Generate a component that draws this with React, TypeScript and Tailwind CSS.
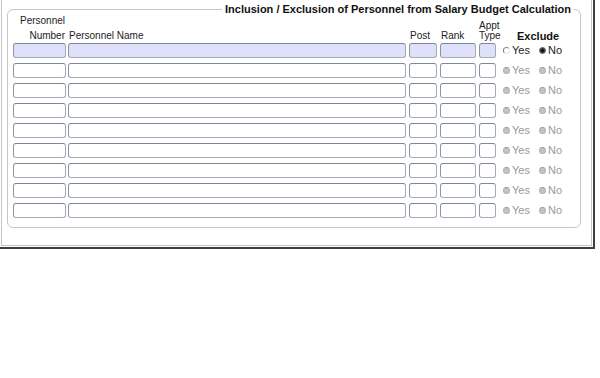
import React from "react";

const inputBase =
  "h-[15px] shrink-0 rounded-[3px] border border-[#a3abb9] border-t-[#7e8797] border-l-[#8c95a5]";

function Radio({ state }: { state: "on" | "off" | "disabled" }) {
  if (state === "disabled") {
    return (
      <span className="inline-block w-[7px] h-[7px] rounded-full bg-[#c4c4c4] border border-[#b0b0b0] border-t-[#9a9a9a]" />
    );
  }
  if (state === "on") {
    return (
      <span className="inline-flex items-center justify-center w-[7px] h-[7px] rounded-full bg-[#3a3a3a] border border-[#6a6a6a]">
        <span className="w-[3px] h-[3px] rounded-full bg-[#111]" />
      </span>
    );
  }
  return (
    <span className="inline-block w-[7px] h-[7px] rounded-full bg-white border border-[#e6e6e6] border-l-[#777] border-t-[#888]" />
  );
}

function Row({ first }: { first: boolean }) {
  const fill = first ? "bg-[#dfe1fa]" : "bg-white";
  return (
    <div className="flex items-center h-[15px]">
      <div className={`${inputBase} ${fill} w-[53px]`} />
      <div className={`${inputBase} ${fill} ml-[2px] w-[338px]`} />
      <div className={`${inputBase} ${fill} ml-[3px] w-[28px]`} />
      <div className={`${inputBase} ${fill} ml-[3px] w-[36px]`} />
      <div className={`${inputBase} ${fill} ml-[3px] w-[17px]`} />
      <div
        className={`ml-[7px] flex items-center text-[11px] leading-[13px] ${
          first ? "text-[#222]" : "text-[#9a9a9a]"
        }`}
      >
        <Radio state={first ? "off" : "disabled"} />
        <span className="ml-[2px]">Yes</span>
        <span className="ml-[9px] flex items-center">
          <Radio state={first ? "on" : "disabled"} />
        </span>
        <span className="ml-[2px]">No</span>
      </div>
    </div>
  );
}

export default function App() {
  return (
    <div className="w-[600px] h-[378px] bg-white font-['Liberation_Sans',Arial,sans-serif] text-[#222]">
      <div className="w-[595px] border-r-2 border-b-2 border-[#3f3f3f]">
        <div className="ml-[1px] mr-[1px] mb-[1px] border-l border-r border-b border-[#c4c4c4] pt-[3px] pb-[17px]">
          <fieldset className="ml-[5px] mr-[10px] border border-[#c6c6c6] rounded-[6px] pl-[5px] pr-0 pb-[9px] pt-0 m-0 min-w-0">
            <legend className="ml-auto mr-[6px] px-[3px] text-[11px] leading-[13px] font-bold text-[#111]">
              Inclusion / Exclusion of Personnel from Salary Budget Calculation
            </legend>
            <div className="-mt-[1px] flex items-end text-[10px] leading-[12px] text-[#222] mb-[1px]">
              <div className="w-[53px] text-right pr-[1px] flex flex-col">
                <span>Personnel</span>
                <span className="mt-[3px]">Number</span>
              </div>
              <div className="ml-[2px] w-[338px] pl-[1px]">Personnel Name</div>
              <div className="ml-[3px] w-[28px] pl-[1px]">Post</div>
              <div className="ml-[3px] w-[36px] pl-[1px]">Rank</div>
              <div className="ml-[3px] w-[17px] text-right flex flex-col">
                <span className="-mb-[2px]">Appt</span>
                <span>Type</span>
              </div>
              <div className="ml-[21px] font-bold text-[11px] text-[#111]">Exclude</div>
            </div>
            <div className="flex flex-col gap-[5px]">
              {Array.from({ length: 9 }).map((_, i) => (
                <Row key={i} first={i === 0} />
              ))}
            </div>
          </fieldset>
        </div>
      </div>
    </div>
  );
}
